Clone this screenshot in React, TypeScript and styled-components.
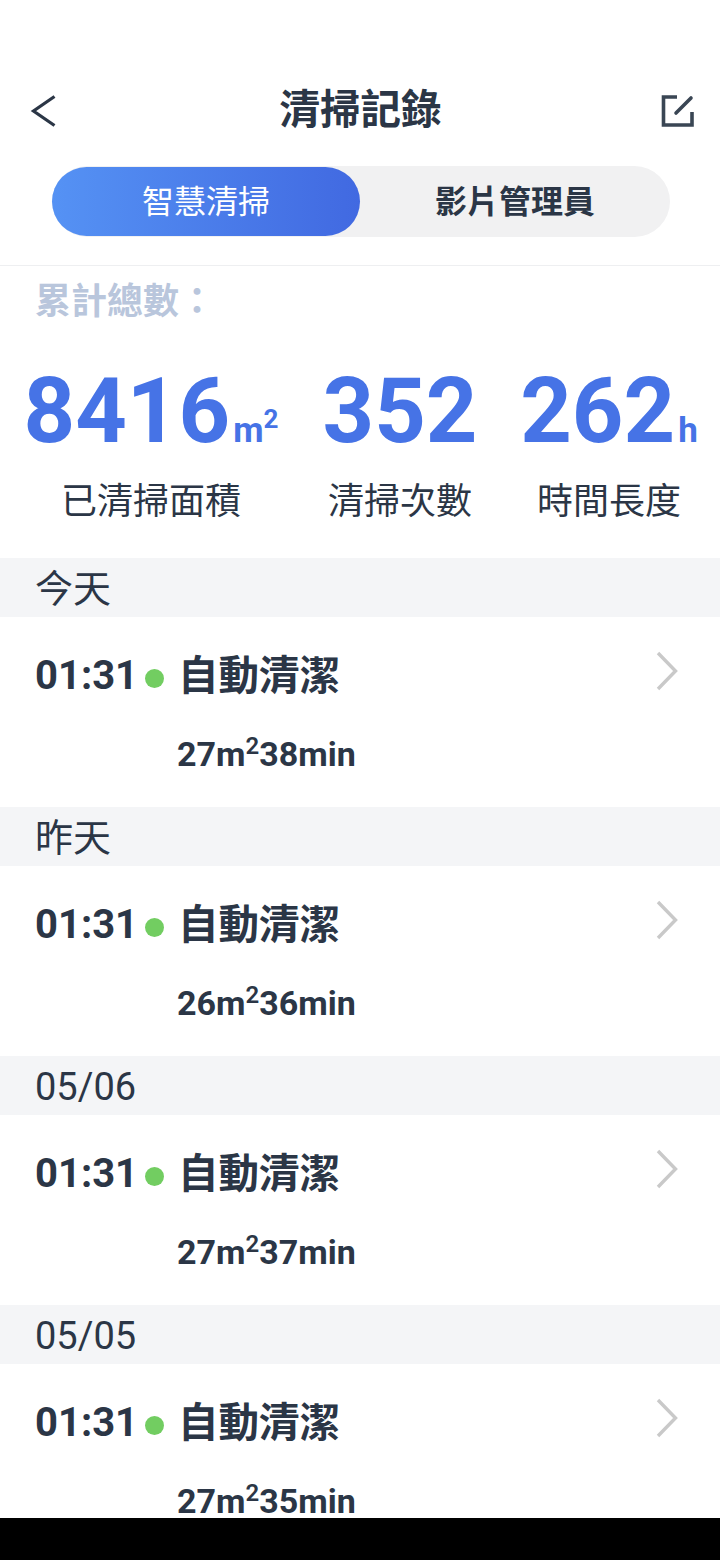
import styled, { createGlobalStyle } from 'styled-components';

const GlobalStyle = createGlobalStyle`
  html, body {
    margin: 0;
    padding: 0;
    background: #fff;
  }
  * {
    box-sizing: border-box;
  }
`;

const FONT = `Roboto, "Noto Sans CJK TC", sans-serif`;

const Page = styled.div`
  position: relative;
  width: 720px;
  height: 1560px;
  overflow: hidden;
  background: #fff;
  font-family: ${FONT};
  color: #2b3646;
  padding-top: 70px;
`;

const Header = styled.header`
  height: 76px;
  padding: 5px 24px 0 25px;
  display: flex;
  align-items: center;
  justify-content: space-between;
`;

const IconButton = styled.button`
  width: 36px;
  height: 44px;
  padding: 0;
  border: 0;
  background: none;
  display: flex;
  align-items: center;
  justify-content: center;
`;

const Title = styled.h1`
  margin: 0;
  font-size: 40.5px;
  line-height: 71px;
  font-weight: 700;
  color: #2b3646;
`;

const Tabs = styled.div`
  margin: 20px 50px 0 52px;
  height: 71px;
  border-radius: 36px;
  background: #f1f1f2;
  display: flex;
  align-items: center;
`;

const Tab = styled.div<{ $active?: boolean }>`
  width: ${p => (p.$active ? '308px' : '310px')};
  height: 69px;
  padding-bottom: 6px;
  border-radius: 35px;
  display: flex;
  align-items: center;
  justify-content: center;
  font-size: 32px;
  font-weight: ${p => (p.$active ? 400 : 700)};
  color: ${p => (p.$active ? '#fff' : '#2b3646')};
  background: ${p => (p.$active ? 'linear-gradient(90deg, #5592f4 0%, #4169e1 100%)' : 'none')};
`;

const Divider = styled.div`
  margin-top: 28px;
  height: 1px;
  background: #eeeff1;
`;

const TotalLabel = styled.div`
  padding-left: 35px;
  font-size: 36px;
  line-height: 72px;
  font-weight: 700;
  color: #b9c6dc;
`;

const Stats = styled.div`
  display: flex;
  height: 220px;
  padding-top: 20px;
`;

const Stat = styled.div<{ $width: number }>`
  width: ${p => p.$width}px;
  display: flex;
  flex-direction: column;
  align-items: center;
`;

const StatValue = styled.div`
  height: 108px;
  font-size: 90px;
  line-height: 108px;
  font-weight: 700;
  color: #4673e6;
  white-space: nowrap;
`;

const StatUnit = styled.span`
  margin-left: 3px;
  font-size: 35px;
  line-height: 0;
  font-weight: 700;
  sup {
    font-size: 26px;
    line-height: 0;
    vertical-align: 14px;
  }
`;

const StatLabel = styled.div`
  margin-top: 11px;
  font-size: 36px;
  line-height: 50px;
  color: #2b3646;
`;

const SectionHead = styled.div`
  height: 59px;
  padding-left: 35px;
  background: #f4f5f7;
  font-size: 38px;
  line-height: 62px;
  color: #2b3646;
`;

const Row = styled.div`
  height: 190px;
  padding: 28px 42px 0 35px;
  display: grid;
  grid-template-columns: 110px 33px 1fr auto;
  grid-template-rows: 62px auto;
  align-items: center;
`;

const Time = styled.div`
  font-size: 40px;
  font-weight: 700;
  line-height: 60px;
`;

const Dot = styled.div`
  width: 19px;
  height: 19px;
  margin-top: 4px;
  border-radius: 50%;
  background: #72cd61;
`;

const RowTitle = styled.div`
  font-size: 40.5px;
  font-weight: 700;
  line-height: 62px;
`;

const Chevron = styled.svg`
  align-self: start;
  margin-top: 6px;
`;

const RowMeta = styled.div`
  grid-column: 3 / 5;
  align-self: start;
  margin: 22px 0 0 -1px;
  font-size: 34px;
  font-weight: 700;
  line-height: 50px;
  sup {
    font-size: 24px;
    font-weight: 600;
    line-height: 0;
    vertical-align: 12px;
  }
`;

const NavBar = styled.div`
  position: absolute;
  left: 0;
  right: 0;
  bottom: 0;
  height: 42px;
  background: #000;
`;

const records = [
  { day: '今天', area: 27, mins: 38 },
  { day: '昨天', area: 26, mins: 36 },
  { day: '05/06', area: 27, mins: 37 },
  { day: '05/05', area: 27, mins: 35 },
];

export default function App() {
  return (
    <Page>
      <GlobalStyle />
      <Header>
        <IconButton aria-label="back">
          <svg width="26" height="32" viewBox="0 0 26 32" fill="none">
            <path d="M24.5 1.5 L3.5 16 L24.5 30.5" stroke="#2b3646" strokeWidth="3.2" />
          </svg>
        </IconButton>
        <Title>清掃記錄</Title>
        <IconButton aria-label="edit">
          <svg width="34" height="34" viewBox="0 0 34 34" fill="none">
            <path d="M16 3 H2.5 V31 H31 V18" stroke="#3a4654" strokeWidth="3.6" />
            <path d="M15 19 L30 4" stroke="#3a4654" strokeWidth="3.6" strokeLinecap="round" />
          </svg>
        </IconButton>
      </Header>
      <Tabs>
        <Tab $active>智慧清掃</Tab>
        <Tab>影片管理員</Tab>
      </Tabs>
      <Divider />
      <TotalLabel>累計總數：</TotalLabel>
      <Stats>
        <Stat $width={302}>
          <StatValue>
            8416<StatUnit>m<sup>2</sup></StatUnit>
          </StatValue>
          <StatLabel>已清掃面積</StatLabel>
        </Stat>
        <Stat $width={196}>
          <StatValue>352</StatValue>
          <StatLabel>清掃次數</StatLabel>
        </Stat>
        <Stat $width={222}>
          <StatValue>
            262<StatUnit>h</StatUnit>
          </StatValue>
          <StatLabel>時間長度</StatLabel>
        </Stat>
      </Stats>
      {records.map(r => (
        <section key={r.day}>
          <SectionHead>{r.day}</SectionHead>
          <Row>
            <Time>01:31</Time>
            <Dot />
            <RowTitle>自動清潔</RowTitle>
            <Chevron width="22" height="40" viewBox="0 0 22 40" fill="none">
              <path d="M2 2 L19.5 20 L2 38" stroke="#c9c9c9" strokeWidth="3.4" />
            </Chevron>
            <RowMeta>
              {r.area}m<sup>2</sup>{r.mins}min
            </RowMeta>
          </Row>
        </section>
      ))}
      <NavBar />
    </Page>
  );
}
